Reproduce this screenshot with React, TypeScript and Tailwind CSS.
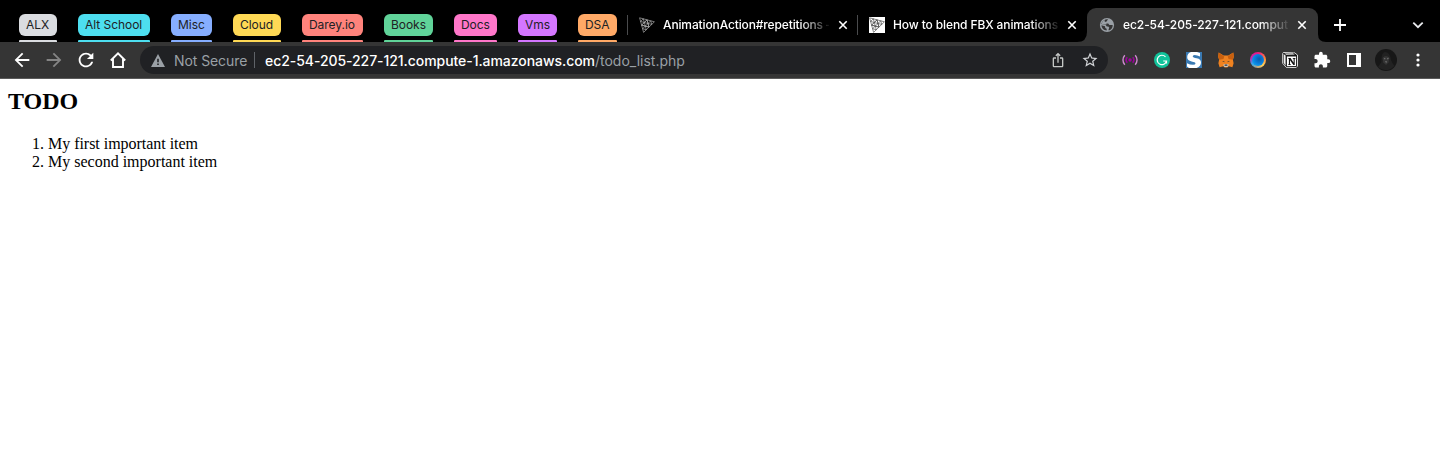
import React from "react";
import { MdArrowBack, MdArrowForward, MdRefresh, MdStarBorder, MdExtension, MdIosShare } from "react-icons/md";

const groups = [
  { name: "ALX", box: "w-[38px] bg-[#dadce0]" },
  { name: "Alt School", box: "w-[72px] bg-[#4ddeef]" },
  { name: "Misc", box: "w-[41px] bg-[#86aeff]" },
  { name: "Cloud", box: "w-[48px] bg-[#ffd955]" },
  { name: "Darey.io", box: "w-[61px] bg-[#ff837c]" },
  { name: "Books", box: "w-[49px] bg-[#60d399]" },
  { name: "Docs", box: "w-[43px] bg-[#ff76c9]" },
  { name: "Vms", box: "w-[39px] bg-[#d476ff]" },
  { name: "DSA", box: "w-[39px] bg-[#ffa966]" },
];

function Group({ name, box }: { name: string; box: string }) {
  return (
    <div className="flex shrink-0 flex-col gap-1">
      <div className={`flex h-[22px] items-center whitespace-nowrap rounded-[6px] pl-[7px] text-[12px] tracking-[-0.04px] text-[#202124] ${box}`}>
        {name}
      </div>
      <div className={`h-0.5 rounded-t-[1px] ${box}`} />
    </div>
  );
}

function Cross() {
  return (
    <svg width="10" height="10" viewBox="0 0 10 10" className="shrink-0" stroke="#fff" strokeWidth="1.6">
      <path d="M1.3 1.3 8.7 8.7M8.7 1.3 1.3 8.7" />
    </svg>
  );
}

function Mesh({ light = false }: { light?: boolean }) {
  const c = light ? "#444" : "#b8b8b8";
  return (
    <svg width="16" height="16" viewBox="0 0 16 16" className={light ? "shrink-0 bg-white" : "shrink-0"}>
      <g fill="none" stroke={c} strokeWidth="0.65" strokeLinejoin="round">
        <path d="M.6.8 15.4 4.8 4.6 15.4Z" />
        <path d="M2.6 8.1 8 2.8l2 7.3ZM1.6 4.4l2.7-2.6 1 3.7ZM9 6.5l2.7-2.7 1 3.6ZM3.6 11.7l2.7-2.6 1 3.6ZM5.3 5.5 8 2.8l1 3.7ZM2.6 8.1l2.7-2.6 1 3.6ZM6.3 9.1 9 6.5l1 3.6Z" />
      </g>
    </svg>
  );
}

function Globe() {
  return (
    <svg width="16" height="16" viewBox="0 0 16 16" className="shrink-0">
      <circle cx="8" cy="8" r="7.1" fill="#9aa0a6" />
      <path d="M9 2.3 7.6 4.6 5.8 5v1.5h3.4l1.2 1.4h3.3a5.8 5.8 0 0 1-3.9 5.5l-.3-1 .8-1.7-1-1.3H7.8L6.6 7.8 2.3 7A5.8 5.8 0 0 1 5.4 2.9Q7.2 1.9 9 2.3Z" fill="#353535" />
      <path d="m2.4 8.3 3.6.9.3 1.8 1.4.7v1.9a5.8 5.8 0 0 1-5.3-5.3Z" fill="#353535" />
      <path d="M2.4 7.2Q3 4 5.8 3v2l1.6.3v2.2Z" fill="#9aa0a6" />
    </svg>
  );
}

function Tab({ icon, title, tracking }: { icon: React.ReactNode; title: string; tracking: string }) {
  return (
    <div className="flex w-[219px] shrink-0 items-center pl-[11px]">
      {icon}
      <div className={`ml-2 mr-[9px] w-[166px] whitespace-nowrap text-[12px] font-medium text-white [mask-image:linear-gradient(90deg,#000_137px,transparent_168px)] ${tracking}`}>
        {title}
      </div>
      <Cross />
    </div>
  );
}

function Divider() {
  return <div className="h-5 w-px shrink-0 bg-[#4a4b4d]" />;
}

function TabStrip() {
  return (
    <div className="flex h-[42px] items-end bg-black">
      <div className="flex w-[608px] shrink-0 gap-[21px] pl-[19px]">
        {groups.map((g) => (
          <Group key={g.name} {...g} />
        ))}
      </div>
      <div className="ml-[19px] flex h-[34px] items-center">
        <Divider />
        <Tab icon={<Mesh />} title="AnimationAction#repetitions –" tracking="tracking-[-0.13px]" />
        <div className="w-[10px]" />
        <Divider />
        <Tab icon={<Mesh light />} title="How to blend FBX animations" tracking="tracking-[-0.11px]" />
      </div>
      <svg width="10" height="10" viewBox="0 0 10 10" className="shrink-0">
        <path d="M10 0V10H0Q10 10 10 0Z" fill="#353535" />
      </svg>
      <div className="flex h-[34px] w-[231px] shrink-0 items-center rounded-t-[9px] bg-[#353535] pl-px">
        <Tab icon={<Globe />} title="ec2-54-205-227-121.comput" tracking="tracking-[-0.08px]" />
      </div>
      <svg width="8" height="8" viewBox="0 0 8 8" className="shrink-0">
        <path d="M0 0V8H8Q0 8 0 0Z" fill="#353535" />
      </svg>
      <div className="flex h-[34px] grow items-center justify-between pl-[8px] pr-[16px]">
        <svg width="12" height="12" viewBox="0 0 12 12" stroke="#fff" strokeWidth="1.8">
          <path d="M6 0V12M0 6H12" />
        </svg>
        <svg width="12" height="8" viewBox="0 0 12 8" fill="none" stroke="#e8eaed" strokeWidth="1.8">
          <path d="m1.3 1.7 4.7 4.5 4.7-4.5" />
        </svg>
      </div>
    </div>
  );
}

function Slot({ children }: { children: React.ReactNode }) {
  return <div className="flex w-8 shrink-0 items-center justify-center">{children}</div>;
}

function Extensions() {
  return (
    <div className="flex items-center">
      <Slot>
        <svg width="16" height="16" viewBox="0 0 16 16" fill="none" strokeWidth="1.6">
          <circle cx="8" cy="8" r="1.7" fill="#a100a1" />
          <path d="M5.3 5.3a4 4 0 0 0 0 5.4M10.7 5.3a4 4 0 0 1 0 5.4" stroke="#990099" />
          <path d="M2.8 3.2a7.2 7.2 0 0 0 0 9.6M13.2 3.2a7.2 7.2 0 0 1 0 9.6" stroke="#d08bd0" strokeWidth="1.4" />
        </svg>
      </Slot>
      <Slot>
        <svg width="16" height="16" viewBox="0 0 16 16" fill="none">
          <circle cx="8" cy="8" r="8" fill="#11c39a" />
          <path d="M11.5 4.9A4.7 4.7 0 1 0 12.5 9H9.2M12.5 8.5v3" stroke="#fff" strokeWidth="1.2" />
        </svg>
      </Slot>
      <Slot>
        <svg width="16" height="16" viewBox="0 0 16 16">
          <path d="M0 0H16V16H0Z" fill="#fff" />
          <path d="M4.2 0H16V4.6L14 3.6Q11 2.6 8.7 2.9 6.6 3.3 7 4.6 7.4 5.6 11 6.3 15 7.2 15 10.3 15 13.8 11.4 15.2L9 16H16V16H0V11.4Q4.6 13.5 7.7 13 9.8 12.6 9.6 11.4 9.3 10.4 5.7 9.6 1.5 8.6 1.5 5.2 1.5 1.7 4.2 0Z" fill="#fff" />
          <path d="M0 0H5Q1.2 1.4 1.2 5.2 1.2 8.4 5.6 9.5 9.4 10.3 9.5 11.4 9.5 12.8 7 12.8 4 12.8 1 11.2V14.5L3 16H0ZM14 1v3.6Q11.2 3.1 8.6 3.1 6.6 3.2 6.7 4.5 6.9 5.6 10.8 6.3 15 7.2 15 10.5 15 14.4 10.6 16H16V0H11Z" fill="#3979b2" />
        </svg>
      </Slot>
      <Slot>
        <svg width="16" height="16" viewBox="0 0 16 16">
          <path d="m.7.6 5 3h4.6l5-3 .6 4.1-1 3 .7 3.5-1.2 4-3.6-1-1.5 1.3H6.7l-1.5-1.3-3.6 1-1.2-4 .7-3.5-1-3Z" fill="#ef8220" />
          <path d="m.7.6 5.6 4-.9 2.3-4.2.8-1-3ZM15.3.6l-5.6 4 .9 2.3 4.2.8 1-3Z" fill="#c8600f" />
          <path d="m5.2 12.8 1.3-.7h3l1.3.7-1.2 2.2H6.4Z" fill="#cfc4b8" />
          <path d="m4 9.2 2.2.1.3 1ZM12 9.2l-2.2.1-.3 1ZM6.7 12.6h2.6l.2 1.2h-3Z" fill="#263238" />
        </svg>
      </Slot>
      <Slot>
        <div className="flex size-4 items-center justify-center rounded-full bg-[conic-gradient(#ed1684,#ff8a35_80deg,#ffd159_135deg,#b9a582_190deg,#31a9ef_235deg,#c02ab0_285deg,#ed1684)]">
          <div className="size-3 rounded-full bg-[radial-gradient(circle_at_60%_42%,#075ca9,#087ddd_45%,#18b9f3)]" />
        </div>
      </Slot>
      <Slot>
        <svg width="16" height="16" viewBox="0 0 16 16">
          <path d="M1.4.5 11.6.2 15.5 3v11.2l-1.2 1.2-9.6.3L.7 11.3V1.5Z" fill="#151515" stroke="#eee" strokeWidth=".9" />
          <path d="M1.7 1.9 3.6 3.4v10L1.7 11Z" fill="#eee" />
          <path d="M2.4 1.5 11 1.2l1.8 1.3-8.6.3Z" fill="#eee" />
          <path d="M4.9 4.4h9.2v9.6l-9.2.3Z" fill="#fff" />
          <path d="M6.2 6h2.4l3 4.7V7l-.9-.4V6h2.8v.6l-.8.4v6h-1.3L8 8.3v3.9l1 .4v.5H6.1v-.5l.8-.4V7l-.7-.4Z" fill="#111" />
        </svg>
      </Slot>
      <Slot><MdExtension size={18} color="#fff" /></Slot>
      <Slot>
        <div className="h-[14px] w-[14px] border-2 border-r-[5px] border-white" />
      </Slot>
      <Slot>
        <svg width="22" height="22" viewBox="0 0 22 22">
          <circle cx="11" cy="11" r="11" fill="#171717" />
          <path d="M3 18q2-3 3.4-5Q6 4 10 3q5 0 6 8 1 3 3.5 6-8 8-16.5 1Z" fill="#222" />
          <path d="M7.5 9q3.5-4 7 0l-1 4.5L11 16l-2.7-2.5Z" fill="#353535" />
          <path d="m8.5 8.8 2 .5-.5 1.4ZM12 9.1l2-.4-1.3 2ZM10 12.3h2l-.8 2Z" fill="#737373" />
        </svg>
      </Slot>
      <Slot>
        <svg width="4" height="14" viewBox="0 0 4 14" fill="#fff">
          <circle cx="2" cy="2" r="1.6" /><circle cx="2" cy="7" r="1.6" /><circle cx="2" cy="12" r="1.6" />
        </svg>
      </Slot>
    </div>
  );
}

function Toolbar() {
  return (
    <div className="flex h-[37px] items-center border-b border-[#5b5b5b] bg-[#353535]">
      <div className="flex w-[140px] shrink-0 items-center pl-1.5 text-white">
        <Slot><MdArrowBack size={22} /></Slot>
        <Slot><MdArrowForward size={22} color="#858585" /></Slot>
        <Slot><MdRefresh size={22} /></Slot>
        <Slot>
          <svg width="16" height="16" viewBox="0 0 16 16" fill="none" stroke="#fff" strokeWidth="1.9">
            <path d="M.8 8.5 8 1.4l7.2 7.1M3 7v8h10V7" />
          </svg>
        </Slot>
      </div>
      <div className="flex h-7 w-[968px] shrink-0 items-center rounded-full bg-[#202124] pl-[11px] pr-0.5 text-[14px]">
        <svg width="14" height="13" viewBox="0 0 14 13" className="shrink-0">
          <path d="M7 0 14 13H0Z" fill="#9aa0a6" />
          <path d="M6.2 4.7h1.6v3.6H6.2ZM6.2 9.5h1.6V11H6.2Z" fill="#202124" />
        </svg>
        <span className="ml-[9px] w-[80px] whitespace-nowrap tracking-[-0.08px] text-[#9aa0a6]">Not Secure</span>
        <div className="h-4 w-px bg-[#5f6368]" />
        <span className="ml-[10px] grow whitespace-nowrap text-[#9aa0a6]">
          <span className="font-medium tracking-[-0.06px] text-white">ec2-54-205-227-121.compute-1.amazonaws.com</span>/todo_list.php
        </span>
        <Slot><MdIosShare size={16} color="#c4c7c5" /></Slot>
        <Slot><MdStarBorder size={18} color="#d2d4d7" /></Slot>
      </div>
      <div className="ml-1.5 flex"><Extensions /></div>
    </div>
  );
}

export default function App() {
  return (
    <div className="h-[461px] w-[1440px] overflow-hidden bg-white font-['Inter',sans-serif]">
      <TabStrip />
      <Toolbar />
      <main className="px-2 pt-2 font-['Liberation_Serif',serif] text-black">
        <h2 className="text-[24px] font-bold leading-[28px]">TODO</h2>
        <ol className="mt-5 list-decimal pl-10 text-[16px] leading-[18px]">
          <li className="tracking-[-0.03px]">My first important item</li>
          <li>My second important item</li>
        </ol>
      </main>
    </div>
  );
}
